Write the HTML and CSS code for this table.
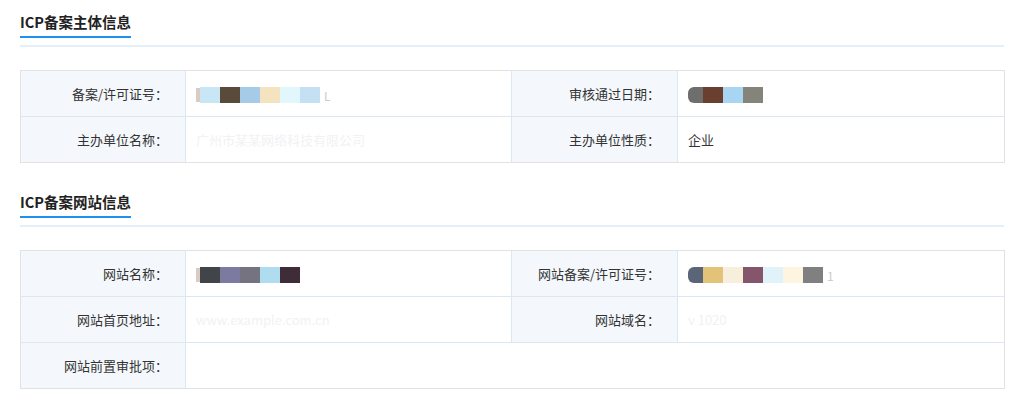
FILE: index.html
```html
<!DOCTYPE html>
<html lang="zh-CN">
<head>
<meta charset="utf-8">
<title>ICP备案信息</title>
<link rel="stylesheet" href="styles.css">
</head>
<body>
<div class="page">
  <section class="section">
    <div class="head"><h2 class="title">ICP备案主体信息</h2></div>
    <table class="info">
      <colgroup><col class="c1"><col class="c2"><col class="c3"><col class="c4"></colgroup>
      <tr>
        <td class="label">备案/许可证号<span class="colon">：</span></td>
        <td class="value"><span class="mosaic"><i class="tick"></i><b style="background:#c9e6f7"></b><b style="background:#5a4a3a"></b><b style="background:#a6cbe6"></b><b style="background:#f5e3c0"></b><b style="background:#e2f7fc"></b><b style="background:#c5e0f3"></b><i class="tail">L</i></span></td>
        <td class="label">审核通过日期<span class="colon">：</span></td>
        <td class="value"><span class="mosaic"><b class="s" style="background:#6e6e6e"></b><b style="background:#6a3f30"></b><b style="background:#a7d5f2"></b><b style="background:#85847a"></b></span></td>
      </tr>
      <tr>
        <td class="label">主办单位名称<span class="colon">：</span></td>
        <td class="value"><span class="faint">广州市某某网络科技有限公司</span></td>
        <td class="label">主办单位性质<span class="colon">：</span></td>
        <td class="value">企业</td>
      </tr>
    </table>
  </section>
  <section class="section second">
    <div class="head"><h2 class="title">ICP备案网站信息</h2></div>
    <table class="info">
      <colgroup><col class="c1"><col class="c2"><col class="c3"><col class="c4"></colgroup>
      <tr>
        <td class="label">网站名称<span class="colon">：</span></td>
        <td class="value"><span class="mosaic"><i class="tick"></i><b style="background:#414549"></b><b style="background:#7c7a9f"></b><b style="background:#75737f"></b><b style="background:#b0dcef"></b><b style="background:#3e2c38"></b></span></td>
        <td class="label">网站备案/许可证号<span class="colon">：</span></td>
        <td class="value"><span class="mosaic"><b class="s" style="background:#5a6677"></b><b style="background:#e3c27a"></b><b style="background:#f7efdb"></b><b style="background:#85566b"></b><b style="background:#e0f3fb"></b><b style="background:#fdf5e0"></b><b style="background:#808080"></b><i class="tail">1</i></span></td>
      </tr>
      <tr>
        <td class="label">网站首页地址<span class="colon">：</span></td>
        <td class="value"><span class="faint">www.example.com.cn</span></td>
        <td class="label">网站域名<span class="colon">：</span></td>
        <td class="value"><span class="faint">v 1020</span></td>
      </tr>
      <tr>
        <td class="label">网站前置审批项<span class="colon">：</span></td>
        <td class="value" colspan="3"></td>
      </tr>
    </table>
  </section>
</div>
</body>
</html>
```

FILE: styles.css
```css
* { box-sizing: border-box; }
html, body { margin: 0; padding: 0; background: #fff; }
body {
  font-family: "Noto Sans CJK SC", "Noto Sans", sans-serif;
  color: #333;
  font-size: 13px;
}
.page { padding: 12px 20px 0; }
.head {
  padding-bottom: 7px;
  border-bottom: 2px solid #e3eef9;
}
.title {
  display: inline-block;
  margin: 0;
  font-size: 14.5px;
  font-weight: 700;
  line-height: 20px;
  color: #222;
  padding-bottom: 4px;
  border-bottom: 2px solid #1e90f0;
}
.info {
  margin-top: 23px;
  width: 100%;
  border-collapse: collapse;
  table-layout: fixed;
  border: 1px solid #e2e2e2;
}
.c1 { width: 165px; }
.c2 { width: 326px; }
.c3 { width: 166px; }
.c4 { width: 327px; }
.info td {
  height: 46px;
  border: 1px solid #dbe7f3;
  vertical-align: middle;
  padding: 0;
  white-space: nowrap;
  overflow: hidden;
}
.info tr:first-child td { border-top-color: #e2e2e2; }
.info tr:last-child td { border-bottom-color: #e2e2e2; }
.info td:first-child { border-left-color: #e2e2e2; }
.info td:last-child { border-right-color: #e2e2e2; }
.label {
  background: #f4f8fc;
  text-align: right;
  padding-right: 17px !important;
  color: #333;
}
.colon { font-family: "Noto Sans CJK TC", "Noto Sans CJK SC", sans-serif; }
.value { padding-left: 10px !important; }
.mosaic { display: inline-flex; align-items: center; height: 16px; vertical-align: middle; }
.mosaic b { display: block; width: 20px; height: 16px; }
.mosaic b.s { width: 15px; border-radius: 6px 0 0 6px; }
.mosaic .tick { display: block; width: 4px; height: 14px; background: #b89a86; opacity: .5; }
.mosaic .tail { font-style: normal; color: #ccc; font-size: 12px; margin-left: 4px; }
.faint { color: #f0f2f4; }
.second { margin-top: 29px; }
```
